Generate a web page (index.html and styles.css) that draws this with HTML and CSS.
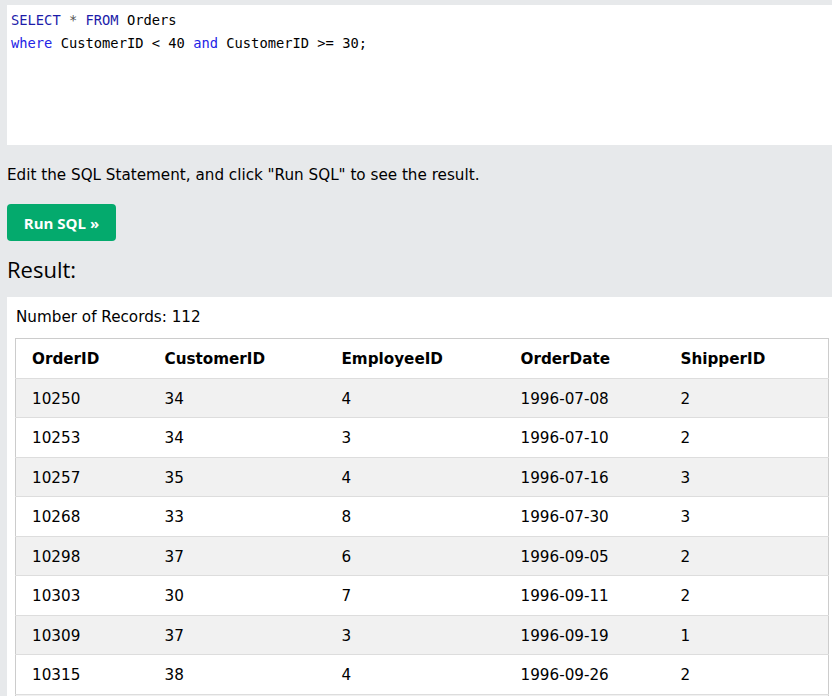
FILE: index.html
```html
<!DOCTYPE html>
<html>
<head>
<meta charset="utf-8">
<link rel="stylesheet" href="styles.css">
</head>
<body>
<div class="page">
  <div class="editor">
    <div class="line"><span class="kw">SELECT</span> <span class="op">*</span> <span class="kw">FROM</span> Orders</div>
    <div class="line"><span class="kw2">where</span> CustomerID &lt; 40 <span class="kw2">and</span> CustomerID &gt;= 30;</div>
  </div>
  <div class="controls">
    <p class="hint">Edit the SQL Statement, and click "Run SQL" to see the result.</p>
    <button class="run">Run SQL »</button>
    <h2 class="result-title">Result:</h2>
  </div>
  <div class="result">
    <div class="count">Number of Records: 112</div>
    <table class="grid">
      <colgroup>
        <col class="c1"><col class="c2"><col class="c3"><col class="c4"><col class="c5">
      </colgroup>
      <thead>
        <tr><th>OrderID</th><th>CustomerID</th><th>EmployeeID</th><th>OrderDate</th><th>ShipperID</th></tr>
      </thead>
      <tbody>
        <tr><td>10250</td><td>34</td><td>4</td><td>1996-07-08</td><td>2</td></tr>
        <tr><td>10253</td><td>34</td><td>3</td><td>1996-07-10</td><td>2</td></tr>
        <tr><td>10257</td><td>35</td><td>4</td><td>1996-07-16</td><td>3</td></tr>
        <tr><td>10268</td><td>33</td><td>8</td><td>1996-07-30</td><td>3</td></tr>
        <tr><td>10298</td><td>37</td><td>6</td><td>1996-09-05</td><td>2</td></tr>
        <tr><td>10303</td><td>30</td><td>7</td><td>1996-09-11</td><td>2</td></tr>
        <tr><td>10309</td><td>37</td><td>3</td><td>1996-09-19</td><td>1</td></tr>
        <tr><td>10315</td><td>38</td><td>4</td><td>1996-09-26</td><td>2</td></tr>
        <tr class="spacer"><td colspan="5"></td></tr>
      </tbody>
    </table>
  </div>
</div>
</body>
</html>
```

FILE: styles.css
```css
html, body {
  margin: 0;
  padding: 0;
  background: #e7e9eb;
  overflow: hidden;
}
.page {
  width: 832px;
  height: 696px;
  overflow: hidden;
  padding-top: 5px;
  box-sizing: border-box;
  font-family: "DejaVu Sans", Verdana, sans-serif;
  font-size: 15.2px;
  color: #000;
}
.editor {
  margin-left: 7px;
  height: 140px;
  background: #fff;
  box-sizing: border-box;
  padding: 4px 0 0 4px;
  font-family: "DejaVu Sans Mono", "Liberation Mono", monospace;
  font-size: 13.75px;
  line-height: 23px;
  color: #000;
}
.kw { color: #1c1caa; }
.kw2 { color: #2323e6; }
.op { color: #555; }
.controls {
  padding: 0 7px;
  display: flex;
  flex-direction: column;
  align-items: flex-start;
}
.hint {
  margin: 18px 0 0;
  line-height: 24px;
  font-size: 15.2px;
}
.run {
  margin-top: 17px;
  width: 109px;
  height: 37px;
  border: none;
  border-radius: 4px;
  background: #04aa6d;
  color: #fff;
  font-family: "Open Sans", "Noto Sans", sans-serif;
  font-weight: 700;
  font-size: 15px;
  padding: 0;
  cursor: pointer;
}
.result-title {
  margin: 14px 0 0;
  font-family: "Open Sans", "Noto Sans", sans-serif;
  font-weight: 400;
  font-size: 22px;
  line-height: 28px;
  height: 42px;
}
.result {
  margin-left: 7px;
  background: #fff;
  padding: 8px 0 0 8px;
  height: 400px;
}
.count {
  line-height: 24px;
  height: 33px;
  padding-left: 1px;
  font-size: 15.2px;
  color: #000;
}
.grid {
  border-collapse: collapse;
  table-layout: fixed;
  width: 813px;
  border: 1px solid #ccc;
  font-size: 15.2px;
}
.c1 { width: 141px; }
.c2 { width: 177px; }
.c3 { width: 179px; }
.c4 { width: 160px; }
.c5 { width: 156px; }
.grid th, .grid td {
  text-align: left;
  padding: 9px 8px 7px;
  line-height: 22.5px;
  border-bottom: 1px solid #ddd;
  white-space: nowrap;
}
.grid th:first-child, .grid td:first-child {
  padding-left: 16px;
}
.grid th {
  font-weight: 700;
  color: #000;
}
.grid td {
  color: #000;
}
.grid tbody tr:nth-child(odd) {
  background: #f1f1f1;
}
.grid tr.spacer td {
  height: 22.5px;
}
```
